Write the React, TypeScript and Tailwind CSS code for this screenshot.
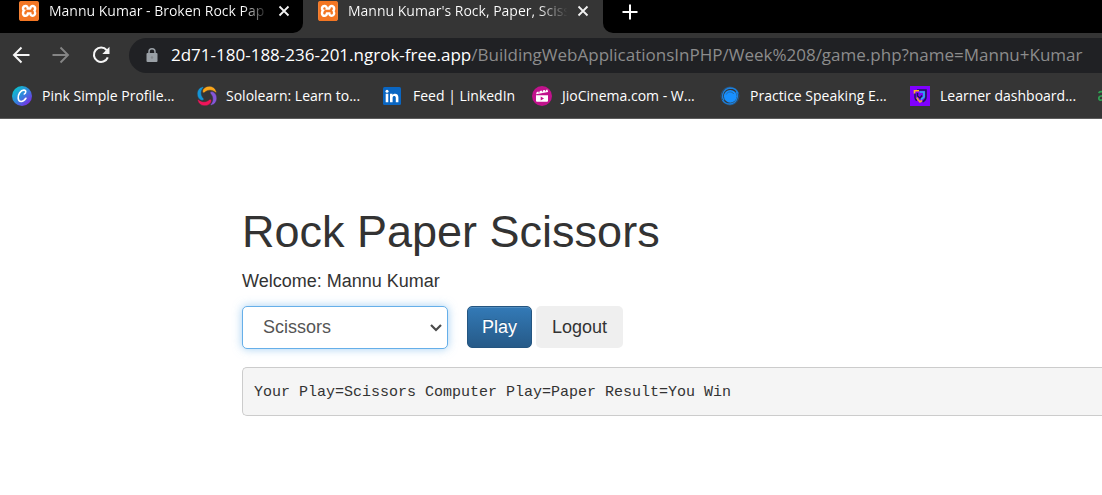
import { useState, type ReactNode } from "react";
import { SiXampp } from "react-icons/si";

function XamppIcon() {
  return (
    <span className="flex size-5 shrink-0 items-center justify-center rounded-sm bg-white text-[#f37623]">
      <SiXampp className="size-5" />
    </span>
  );
}

function CloseIcon() {
  return (
    <svg viewBox="0 0 12 12" className="size-3" fill="none" stroke="#f1f1f1" strokeWidth="1.8">
      <path d="M1.500 1.500l9 9M10.500 1.500l-9 9" />
    </svg>
  );
}

function Tab({ title, active = false }: { title: string; active?: boolean }) {
  return (
    <div className={active ? "w-[300px] shrink-0 pr-3 pl-[15px]" : "w-[303px] shrink-0 rounded-br-[10px] bg-black pr-[11px] pl-[19px]"}>
      <div className="flex h-[22px] items-center">
        <XamppIcon />
        <span className={active
          ? "ml-[10px] w-[224px] overflow-hidden whitespace-nowrap bg-linear-to-r from-white from-85% to-transparent to-98% bg-clip-text text-transparent"
          : "ml-[10px] w-[220px] overflow-hidden whitespace-nowrap bg-linear-to-r from-white from-88% to-transparent bg-clip-text text-transparent"}>
          {title}
        </span>
        <button type="button" aria-label="Close tab" className="ml-auto flex size-4 items-center justify-center">
          <CloseIcon />
        </button>
      </div>
    </div>
  );
}

function CanvaIcon() {
  return (
    <svg viewBox="0 0 20 20" className="size-5">
      <defs>
        <linearGradient id="canva" x1="0.1" y1="0.1" x2="0.85" y2="0.9">
          <stop offset="0" stopColor="#08c5cc" />
          <stop offset="0.5" stopColor="#2f87dc" />
          <stop offset="1" stopColor="#7b2ce6" />
        </linearGradient>
      </defs>
      <circle cx="10" cy="10" r="10" fill="url(#canva)" />
      <path d="M12.300 7.900c1.700-.6 2.300-3.800-.4-3.800-3.300 0-6 4.300-5.700 8.100.4 4.400 5.100 4.200 7.700.1" fill="none" stroke="#fff" strokeWidth="1.600" strokeLinecap="round" />
    </svg>
  );
}

const SOLOLEARN_BLADES = [
  { color: "#f9a51a", angle: 0 },
  { color: "#8456d8", angle: 90 },
  { color: "#f0145a", angle: 180 },
  { color: "#1494d6", angle: 270 },
];

function SololearnIcon() {
  return (
    <svg viewBox="0 0 22 22" className="size-[22px]">
      {SOLOLEARN_BLADES.map(({ color, angle }) => (
        <path
          key={angle}
          d="M7 4.600C9.500-.2 18.500-.3 20.300 6.600c.2.900-.4 1.200-1 .7C16 4.600 12 4.400 8.400 7.600 7 8.600 6 6.500 7 4.600z"
          fill={color}
          stroke="#353535"
          strokeWidth="0.500"
          transform={`rotate(${angle} 11 11)`}
        />
      ))}
    </svg>
  );
}

function LinkedInIcon() {
  return (
    <svg viewBox="0 0 18 18" className="size-[18px]">
      <rect width="18" height="18" rx="1.500" fill="#0a66c2" />
      <g fill="#fff">
        <circle cx="4" cy="4.200" r="1.500" />
        <path d="M2.700 6.800h2.600v8.400H2.700zM7 6.800h2.500V8c1.400-2.100 5.900-2 5.900 2.200v5h-2.600v-4.500c0-2.500-3.200-2.300-3.200 0v4.500H7z" />
      </g>
    </svg>
  );
}

function JioCinemaIcon() {
  return (
    <svg viewBox="0 0 20 20" className="size-5">
      <circle cx="10" cy="10" r="10" fill="#c1128c" />
      <path d="M4 9.200h12v5.300c0 .8-.5 1.300-1.300 1.300H5.300c-.8 0-1.300-.5-1.300-1.300z" fill="#fff" />
      <path d="M4 8.200L4.800 6l1.600-.5L7 7.200l.8-2.100 2-.5.4 1.900.9-2.200 1.900-.4.4 1.800.9-2 1.100-.3.7 2.600z" fill="#fff" />
      <path d="M8.700 10.400v4l3.300-2z" fill="#c1128c" />
    </svg>
  );
}

function PracticeIcon() {
  return (
    <svg viewBox="0 0 20 20" className="size-5" fill="none">
      <circle cx="10" cy="10" r="9" stroke="#27527d" strokeWidth="1" />
      <path d="M4 14.500A8 8 0 0 1 10 2c4 0 7 2.200 8 5.500M16 5.500A8 8 0 0 1 10 18c-3.500 0-6-1.500-7.500-4" stroke="#1c80dd" strokeWidth="1.400" />
      <circle cx="10.300" cy="10.300" r="6.400" fill="#1890ff" />
      <path d="M6.200 8.500C7.500 5.400 12 5 13.800 8" stroke="#2467a6" strokeWidth="0.900" />
    </svg>
  );
}

function LearnerIcon() {
  return (
    <svg viewBox="0 0 20 20" className="size-5" fill="none">
      <rect width="20" height="20" fill="#8000ff" />
      <path d="M7 4h9v7c0 2.500-1.500 4-3.500 5" stroke="#13204d" strokeWidth="1.600" />
      <path d="M9 4.700H4.500v3" stroke="#ffb629" strokeWidth="1.600" />
      <path d="M5 7.500v4c0 1.500 1 2.500 2 3" stroke="#13204d" strokeWidth="1.400" />
      <path d="M7 11.500c.5 2 1.500 3 3 4.500l2-1.500" stroke="#f5a43c" strokeWidth="1.600" />
      <path d="M9.500 6H14v4.800L11 13.500" stroke="#28b5ec" strokeWidth="1.700" />
      <path d="M7.500 7v3l2.500 2 2-2.500" stroke="#13204d" strokeWidth="1.400" />
    </svg>
  );
}

function Bookmark({ icon, label }: { icon: ReactNode; label: string }) {
  return (
    <a href="#" className="flex items-center whitespace-nowrap">
      <span className="flex w-[30px] shrink-0 items-center">{icon}</span>
      {label}
    </a>
  );
}

function BrowserChrome() {
  return (
    <header className="overflow-hidden border-b border-[#5c5c5c] bg-[#353535] font-['Open_Sans',sans-serif] text-sm text-white">
      <div className="flex h-[33px]">
        <Tab title="Mannu Kumar - Broken Rock Pap" />
        <Tab title="Mannu Kumar's Rock, Paper, Sciss" active />
        <div className="flex-1 rounded-bl-[10px] bg-black pl-[19px]">
          <button type="button" aria-label="New tab" className="flex h-[23px] items-center">
            <svg viewBox="0 0 16 16" className="size-4" fill="none" stroke="#fff" strokeWidth="2">
              <path d="M8 .5v15M.5 8h15" />
            </svg>
          </button>
        </div>
      </div>

      <div className="flex h-11 items-center">
        <div className="flex w-[129px] shrink-0 items-center gap-[22px] pl-3">
          <button type="button" aria-label="Back">
            <svg viewBox="0 0 18 18" className="size-[18px]" fill="none" stroke="#f5f5f5" strokeWidth="2">
              <path d="M17.500 9H2.500M9.500 1.500L2 9l7.500 7.500" />
            </svg>
          </button>
          <button type="button" aria-label="Forward">
            <svg viewBox="0 0 18 18" className="size-[18px]" fill="none" stroke="#858585" strokeWidth="1.900">
              <path d="M.5 9h15M8.500 1.500L16 9l-7.500 7.500" />
            </svg>
          </button>
          <button type="button" aria-label="Reload">
            <svg viewBox="0 0 18 18" className="size-[18px]" fill="none">
              <path d="M14.700 4.200A7.200 7.200 0 1 0 15.800 11.400" stroke="#f5f5f5" strokeWidth="2.100" />
              <path d="M17.500.8v7.200h-7.200z" fill="#f5f5f5" />
            </svg>
          </button>
        </div>
        <div className="-mr-6 flex h-[35px] flex-1 items-center rounded-l-full bg-[#202124] pl-[17px]">
          <svg viewBox="0 0 12 14" className="h-3.5 w-3 shrink-0">
            <rect x="0.500" y="5" width="11" height="9" rx="1" fill="#9aa0a6" />
            <path d="M3 6V3.800a3 3 0 0 1 6 0V6" fill="none" stroke="#9aa0a6" strokeWidth="1.500" />
            <circle cx="6" cy="9.500" r="1.200" fill="#85898e" />
          </svg>
          <span className="ml-[13px] whitespace-nowrap text-[17px] text-[#8c8c8c]">
            <span className="text-white">2d71-180-188-236-201.ngrok-free.app</span>
            /BuildingWebApplicationsInPHP/Week%208/game.php?name=Mannu+Kumar
          </span>
        </div>
      </div>

      <nav aria-label="Bookmarks" className="grid h-[41px] grid-cols-[184px_187px_149px_188px_190px_188px_30px] items-center pb-1 pl-3">
        <Bookmark icon={<CanvaIcon />} label="Pink Simple Profile..." />
        <Bookmark icon={<SololearnIcon />} label="Sololearn: Learn to..." />
        <Bookmark icon={<LinkedInIcon />} label="Feed | LinkedIn" />
        <Bookmark icon={<JioCinemaIcon />} label="JioCinema.com - W..." />
        <Bookmark icon={<PracticeIcon />} label="Practice Speaking E..." />
        <Bookmark icon={<LearnerIcon />} label="Learner dashboard..." />
        <a href="#" aria-label="More bookmarks">
          <svg viewBox="0 0 12 12" className="size-3" fill="none" stroke="#2f9e52" strokeWidth="1.800">
            <path d="M.5 3C2 1.200 6 1 6 4v6M6 6C3 5.500.8 6.500.8 8.300.8 10.800 5 10.500 6 8M6 6h5c0-5-5-5-5-1v2c0 4 4 4 5 2" />
          </svg>
        </a>
      </nav>
    </header>
  );
}

export default function App() {
  const [play, setPlay] = useState("2");
  return (
    <div className="min-h-screen overflow-hidden bg-white">
      <BrowserChrome />
      <main className="pt-[88px] pl-[242px] font-['Liberation_Sans',sans-serif] text-lg text-[#333]">
        <h1 className="text-[45px] leading-[50px]">Rock Paper Scissors</h1>
        <p className="mt-3 leading-[25px]">Welcome: Mannu Kumar</p>
        <form className="mt-3 flex items-start" onSubmit={(e) => e.preventDefault()}>
          <div className="relative mr-[19px] w-[206px]">
            <select
              aria-label="Your play"
              value={play}
              onChange={(e) => setPlay(e.target.value)}
              className="h-[43px] w-full appearance-none rounded-[5px] border border-[#66afe9] bg-white pb-0.5 pl-5 text-[#555] shadow-[0_0_10px_rgba(102,175,233,0.6)] outline-none"
            >
              <option value="-1">Select</option>
              <option value="0">Rock</option>
              <option value="1">Paper</option>
              <option value="2">Scissors</option>
              <option value="3">Test</option>
            </select>
            <svg viewBox="0 0 12 8" className="pointer-events-none absolute top-[18px] right-[6px] h-2 w-3" fill="none" stroke="#4a4a4a" strokeWidth="2.200">
              <path d="M1 1l5 5 5-5" />
            </svg>
          </div>
          <button type="submit" className="mr-1 h-[42px] rounded-[5px] border border-[#245580] bg-linear-to-b from-[#337ab7] to-[#265a88] px-3.5 text-white shadow-[inset_0_1px_0_rgba(255,255,255,0.15)] text-shadow-[0_-1px_0_rgba(0,0,0,0.2)]">
            Play
          </button>
          <button type="submit" className="h-[42px] rounded-[5px] bg-[#efefef] px-4">
            Logout
          </button>
        </form>
        <pre className="mt-[18px] rounded-l-[5px] border border-r-0 border-[#ccc] bg-[#f5f5f5] pt-[13px] pb-[11px] pl-[11px] font-['Liberation_Mono',monospace] text-[15px] leading-[23px]">
          Your Play=Scissors Computer Play=Paper Result=You Win
        </pre>
      </main>
    </div>
  );
}
